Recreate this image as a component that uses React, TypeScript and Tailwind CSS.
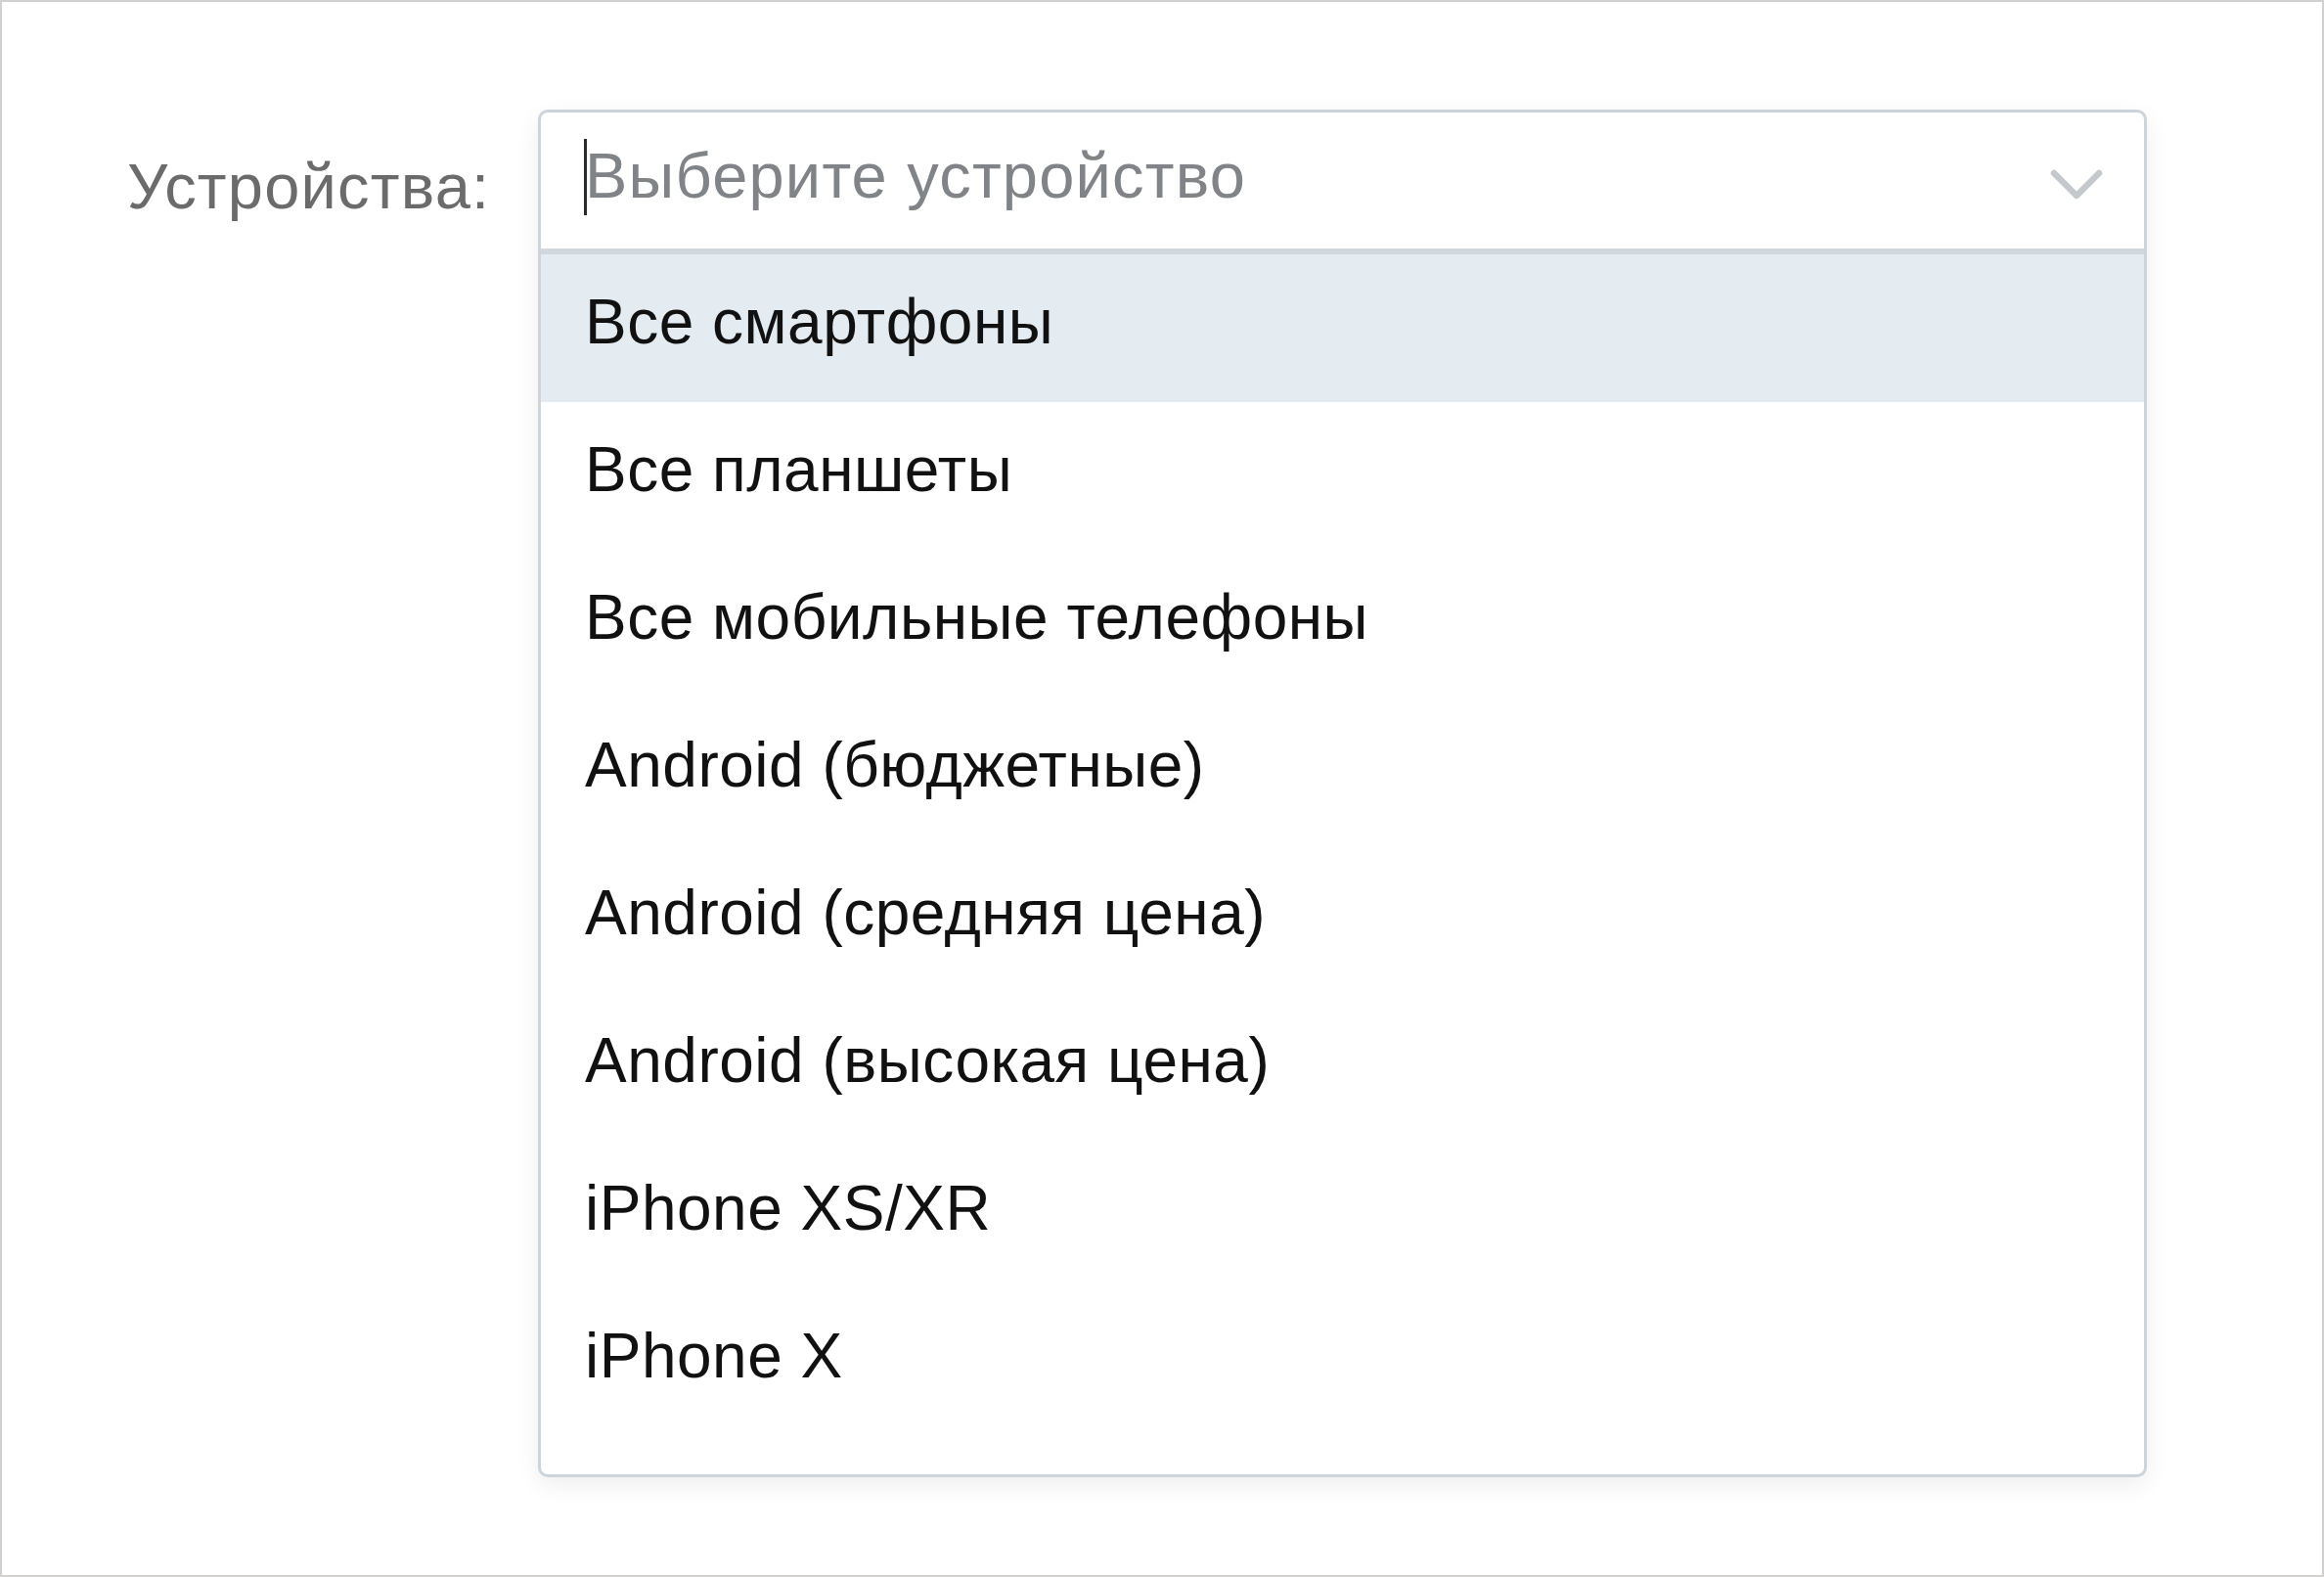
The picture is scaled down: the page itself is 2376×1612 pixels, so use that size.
import React from 'react';

const DEVICES = [
  'Все смартфоны',
  'Все планшеты',
  'Все мобильные телефоны',
  'Android (бюджетные)',
  'Android (средняя цена)',
  'Android (высокая цена)',
  'iPhone XS/XR',
  'iPhone X',
];

function Chevron() {
  return (
    <svg width="54" height="31" viewBox="0 0 54 31" className="shrink-0 mt-[31px]">
      <polyline
        points="4,4 27,27 50,4"
        fill="none"
        stroke="#c5c9cd"
        strokeWidth="6.5"
        strokeLinecap="round"
        strokeLinejoin="round"
      />
    </svg>
  );
}

export default function App() {
  const active = 0;

  return (
    <div
      className="w-[2376px] h-[1612px] bg-white border-2 border-[#d3d0d0] pt-[110px] pl-[128px]"
      style={{ fontFamily: '"Liberation Sans", Arial, sans-serif' }}
    >
      <div className="flex items-start">
        <label className="w-[420px] pr-[51px] text-right text-[65px] leading-[63px] tracking-[1.2px] text-[#6b6b6b] mt-[47px]">
          Устройства:
        </label>

        <div className="w-[1645px] h-[1398px] flex flex-col bg-white border-[3px] border-[#cdd4da] rounded-[10px] overflow-hidden shadow-[0_8px_24px_rgba(0,0,0,0.07)]">
          <div className="h-[145px] shrink-0 flex items-start pt-[27px] pl-[45px] pr-[42px] border-b-[6px] border-[#d0d7dd]">
            <div className="relative mt-[6px]">
              <span className="absolute left-[-1px] top-[-6px] w-[3px] h-[78px] bg-[#2b2b2b]" />
              <span className="text-[65px] leading-[63px] tracking-[1.2px] text-[#808388]">Выберите устройство</span>
            </div>
            <div className="ml-auto">
              <Chevron />
            </div>
          </div>

          <ul className="flex-1 overflow-hidden">
            {DEVICES.map((d, i) => (
              <li
                key={d}
                className={
                  'h-[151px] pt-[38px] pl-[45px] text-[64px] leading-[63px] tracking-[0.5px] text-[#111111] ' +
                  (i === active ? 'bg-[#e4ebf1]' : 'bg-white')
                }
              >
                {d}
              </li>
            ))}
          </ul>
        </div>
      </div>
    </div>
  );
}
